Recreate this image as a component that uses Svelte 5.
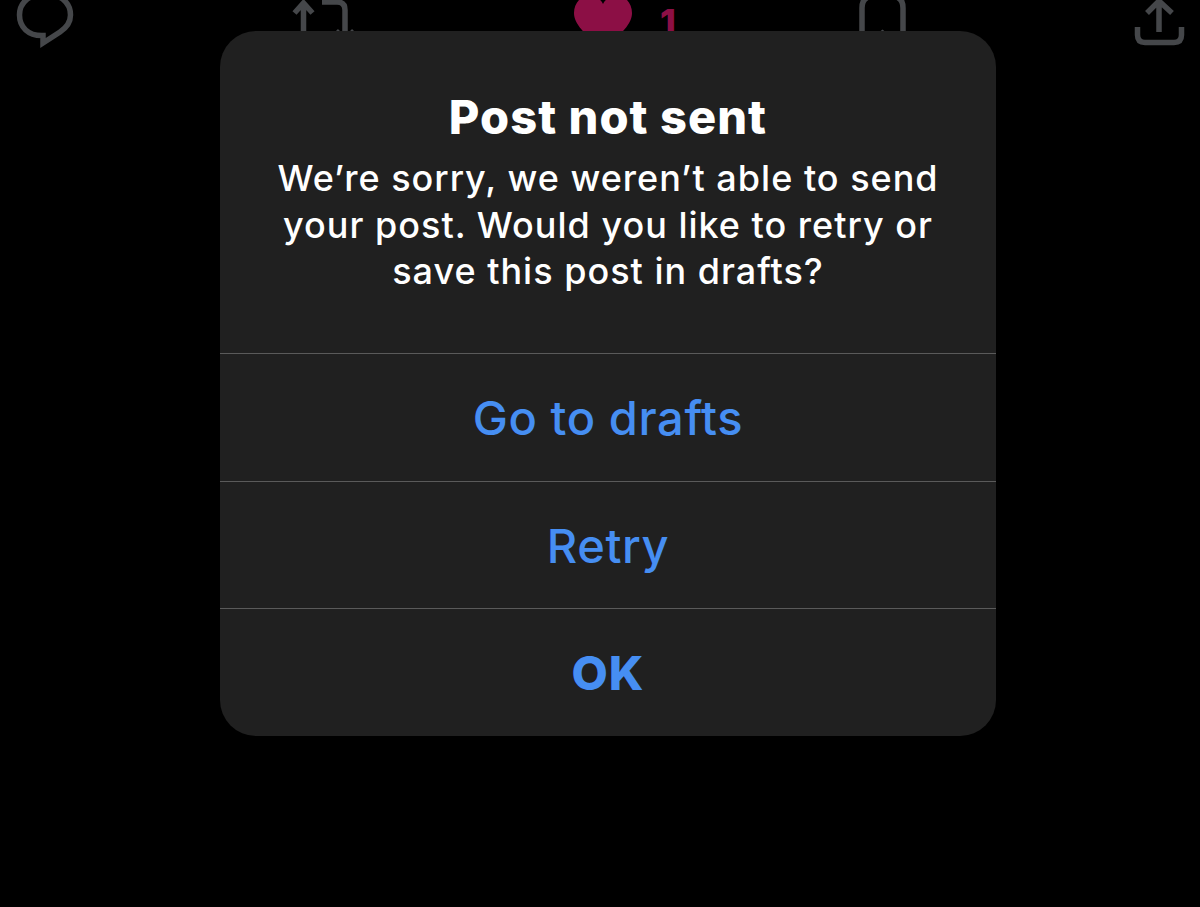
<script>
  const actions = [
    { label: 'Go to drafts', strong: false },
    { label: 'Retry', strong: false },
    { label: 'OK', strong: true }
  ];
</script>

<div class="screen">
  <div class="toolbar">
    <svg class="icon reply" width="60" height="50" viewBox="15 0 60 50" aria-hidden="true">
      <path d="M43 35.5 C28 36 19.5 27 19.5 15 C19.5 2 30 -6 45 -6 C60 -6 70.5 2 70.5 15 C70.5 23 66 28 60 32 L43 43 Z" />
    </svg>
    <svg class="icon repost" width="75" height="50" viewBox="285 0 75 50" aria-hidden="true">
      <path d="M303.5 40 V3 M294.5 13 L303.5 3 L312.5 13" />
      <path d="M322 2 H337 Q345 2 345 10 V40" />
      <path d="M336 31 L345 40 L354 31" />
    </svg>
    <div class="like">
      <svg width="65" height="50" viewBox="570 0 65 50" aria-hidden="true">
        <path d="M603 4 C600 -3 592 -4 588 -4 C580 -4 574 4 574 13 C574 24 584 33 603 50 C622 33 632 24 632 13 C632 4 626 -4 618 -4 C614 -4 606 -3 603 4 Z" />
      </svg>
      <span>1</span>
    </div>
    <svg class="icon bookmark" width="55" height="50" viewBox="855 0 55 50" aria-hidden="true">
      <path d="M862 40 V8 Q862 -4 874 -4 H891 Q903 -4 903 8 V40" />
      <path d="M868 45 L882.5 33 L897 45" />
    </svg>
    <svg class="icon share" width="60" height="50" viewBox="1130 0 60 50" aria-hidden="true">
      <path d="M1161 32 V2 M1149 13 L1161 1 L1174 13" />
      <path d="M1139.5 27 V35 Q1139.5 42.5 1147 42.5 H1176 Q1183.5 42.5 1183.5 35 V27" />
    </svg>
  </div>

  <div class="dialog" role="alertdialog" aria-labelledby="dialog-title">
    <div class="message">
      <h1 id="dialog-title">Post not sent</h1>
      <p>We’re sorry, we weren’t able to send<br />your post. Would you like to retry or<br />save this post in drafts?</p>
    </div>
    {#each actions as action}
      <button class:strong={action.strong}>{action.label}</button>
    {/each}
  </div>
</div>

<style>
  :global(body) {
    margin: 0;
    background: #000;
  }

  .screen {
    position: relative;
    height: 907px;
    overflow: hidden;
    background: #000;
    font-family: Inter, "Liberation Sans", sans-serif;
  }

  .toolbar {
    display: flex;
    align-items: flex-start;
    padding-left: 15px;
  }

  .icon {
    display: block;
    flex: none;
    fill: none;
    stroke: #45474a;
    stroke-width: 5.5;
  }

  .repost { margin-left: 210px; }
  .bookmark { margin-left: 175px; }
  .share { margin-left: 218px; }

  .like {
    display: flex;
    flex: none;
    align-items: flex-start;
    width: 110px;
    margin-left: 210px;
    color: #8c0f45;
    font-size: 36px;
    font-weight: 800;
    line-height: 44px;
  }

  .like svg {
    display: block;
    flex: none;
    fill: #8c0f45;
  }

  .like span {
    display: block;
    margin-left: 25px;
  }

  .dialog {
    position: absolute;
    top: 31px;
    left: 220px;
    width: 776px;
    height: 705px;
    display: flex;
    flex-direction: column;
    background: #202020;
    border-radius: 36px;
    overflow: hidden;
    text-align: center;
  }

  .message {
    height: 322px;
    box-sizing: border-box;
    padding-top: 58px;
    color: #fff;
  }

  h1 {
    margin: 0;
    font-size: 47px;
    font-weight: 800;
    line-height: 56px;
    letter-spacing: 1.05px;
  }

  p {
    margin: 10px 0 0;
    font-size: 36px;
    font-weight: 500;
    line-height: 46.5px;
    letter-spacing: 1px;
  }

  button {
    flex: 1;
    padding: 0;
    border: 0;
    border-top: 1px solid #5a5a5a;
    background: none;
    color: #468ef2;
    font: 500 47px/1 Inter, "Liberation Sans", sans-serif;
    letter-spacing: 0.6px;
  }

  button.strong {
    font-weight: 800;
    letter-spacing: 1px;
  }
</style>
